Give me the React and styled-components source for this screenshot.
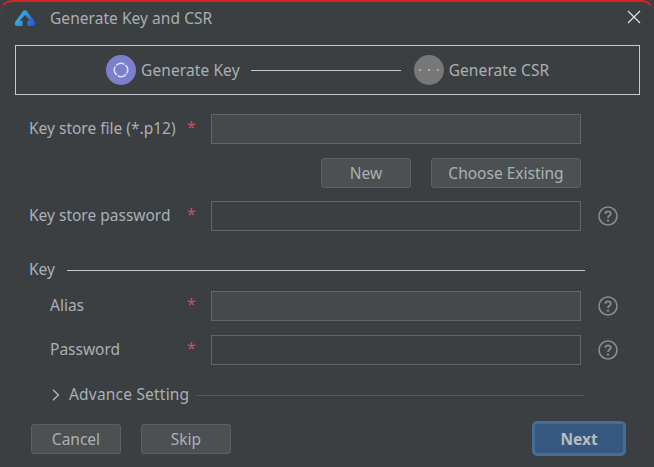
import React from "react";
import styled, { createGlobalStyle } from "styled-components";

const Global = createGlobalStyle`
  html, body { margin: 0; padding: 0; background: #3c3f41; }
  body { width: 654px; height: 467px; overflow: hidden; font-family: "Noto Sans", "Open Sans", sans-serif; }
  * { box-sizing: border-box; }
`;

const Window = styled.div`
  position: relative;
  width: 654px;
  height: 467px;
  background: #3c3f41;
  border: 1px solid #3c3f41;
  border-top: 2px solid #d8231f;
  border-radius: 12px;
  color: #a9b0b5;
  font-size: 15.5px;
  overflow: hidden;
  display: flex;
  flex-direction: column;
`;

const FrameEdge = styled.svg`
  position: absolute;
  left: -1px;
  top: -2px;
  pointer-events: none;
`;

const TitleBar = styled.div`
  height: 32px;
  display: flex;
  align-items: center;
  padding: 0 12px 0 14px;
  flex: none;
`;

const TitleText = styled.span`
  margin-left: 14px;
  flex: 1;
  color: #a9afb3;
  letter-spacing: 0.05px;
`;

const CloseIcon = styled.svg`
  margin-bottom: 2px;
  flex: none;
`;

const Stepper = styled.div`
  margin: 11px 13px 0 14px;
  height: 50px;
  border: 1px solid #c8c8c8;
  display: flex;
  align-items: center;
  padding-left: 90px;
  flex: none;
`;

const StepDot = styled.span`
  width: 30px;
  height: 30px;
  border-radius: 50%;
  background: ${(p) => p.$bg};
  display: flex;
  align-items: center;
  justify-content: center;
  flex: none;
`;

const StepLabel = styled.span`
  margin-left: 5px;
  line-height: 20px;
  white-space: nowrap;
  letter-spacing: 0.1px;
`;

const StepLine = styled.span`
  width: 150px;
  height: 1px;
  background: #c8c8c8;
  margin: 0 13px 0 11px;
  flex: none;
`;

const Form = styled.div`
  padding: 19px 0 0 28px;
  display: flex;
  flex-direction: column;
`;

const Row = styled.div`
  display: flex;
  align-items: center;
  height: 30px;
  margin-top: ${(p) => p.$top || 0}px;
`;

const Label = styled.span`
  width: 158px;
  padding-left: ${(p) => (p.$indent ? 21 : 0)}px;
  padding-bottom: 2px;
  white-space: nowrap;
  flex: none;
`;

const Required = styled.span`
  width: 24px;
  color: #c75460;
  flex: none;
  position: relative;
  top: -2px;
`;

const Field = styled.div`
  width: 370px;
  height: 30px;
  border: 1px solid #646464;
  background: ${(p) => (p.$filled ? "#45494a" : "transparent")};
  flex: none;
`;

const Help = styled.span`
  margin-left: 17px;
  width: 20px;
  height: 20px;
  display: flex;
  flex: none;
`;

const ActionRow = styled.div`
  display: flex;
  justify-content: flex-end;
  gap: 20px;
  width: 552px;
  height: 30px;
  margin-top: 14px;
`;

const Button = styled.button`
  width: ${(p) => p.$w}px;
  height: 30px;
  border: 1px solid #5e6060;
  border-radius: 3px;
  background: #4c5052;
  color: #a9b0b5;
  font: inherit;
  padding: 0;
  margin: 0;
`;

const KeyHeader = styled.div`
  display: flex;
  align-items: center;
  height: 20px;
  margin-top: 29px;
  width: 556px;
`;

const KeyText = styled.span`
  padding-bottom: 2px;
`;

const KeyRule = styled.span`
  flex: 1;
  height: 1px;
  background: #c8c8c8;
  margin-left: 12px;
`;

const AdvanceRow = styled.div`
  display: flex;
  align-items: center;
  height: 20px;
  margin-top: 20px;
  width: 556px;
  padding-left: 22px;
`;

const AdvanceText = styled.span`
  margin-left: 9px;
  padding-bottom: 2px;
  white-space: nowrap;
  letter-spacing: 0.2px;
`;

const AdvanceRule = styled.span`
  flex: 1;
  height: 1px;
  background: #545556;
  margin-left: 7px;
`;

const Footer = styled.div`
  display: flex;
  align-items: flex-start;
  gap: 20px;
  padding: 0 27px 0 30px;
  margin-top: 19px;
`;

const NextButton = styled.button`
  margin-left: auto;
  margin-top: -3px;
  width: 94px;
  height: 35px;
  border: 3px solid #466d94;
  border-radius: 5px;
  background: #365880;
  color: #b8bcbe;
  font: inherit;
  font-weight: 700;
  padding: 0;
`;

const Logo = () => (
  <svg width="21" height="16" viewBox="0 0 21 16">
    <defs>
      <linearGradient id="lg" x1="0" y1="0.2" x2="1" y2="0.7">
        <stop offset="0" stopColor="#2fc6d6" />
        <stop offset="0.5" stopColor="#2f94e0" />
        <stop offset="1" stopColor="#2a5cd0" />
      </linearGradient>
    </defs>
    <path
      fill="url(#lg)"
      fillRule="evenodd"
      d="M8.4 0.8 Q10 -0.4 11.6 0.8 L19.8 12 Q21.2 15.6 17.8 16 L2.2 16 Q-1.2 15.6 0.2 12 Z M10 5 L4.8 10.8 L7.6 10.8 L7.6 16 L12.4 16 L12.4 10.8 L15.2 10.8 Z"
    />
  </svg>
);

const Close = () => (
  <CloseIcon width="14" height="14" viewBox="0 0 14 14">
    <path d="M1 1 L13 13 M13 1 L1 13" stroke="#e6e6e6" strokeWidth="1.1" fill="none" />
  </CloseIcon>
);

const HelpIcon = () => (
  <svg width="20" height="20" viewBox="0 0 20 20">
    <circle cx="10" cy="10" r="9" fill="none" stroke="#8a8c8d" strokeWidth="1.6" />
    <path d="M7.4 7.8 C7.4 4.6 12.8 4.6 12.8 7.8 C12.8 9.6 10 9.6 10 12" fill="none" stroke="#8a8c8d" strokeWidth="1.8" />
    <circle cx="10" cy="14.6" r="1.2" fill="#8a8c8d" />
  </svg>
);

const Spinner = () => (
  <svg width="16" height="16" viewBox="0 0 16 16">
    <circle
      cx="8"
      cy="8"
      r="6.6"
      fill="none"
      stroke="#dfe2f4"
      strokeWidth="1.5"
      strokeDasharray="9 1.4"
      transform="rotate(40 8 8)"
    />
  </svg>
);

const Dots = () => (
  <svg width="20" height="4" viewBox="0 0 20 4">
    <circle cx="1" cy="2" r="1" fill="#bdbdbd" />
    <circle cx="10" cy="2" r="1" fill="#bdbdbd" />
    <circle cx="19" cy="2" r="1" fill="#bdbdbd" />
  </svg>
);

const Chevron = () => (
  <svg width="9" height="12" viewBox="0 0 9 12">
    <path d="M2 0.8 L7.4 6 L2 11.2" fill="none" stroke="#a9b0b5" strokeWidth="1.5" />
  </svg>
);

const FormRow = ({ label, indent, filled, help, top }) => (
  <Row $top={top}>
    <Label $indent={indent}>{label}</Label>
    <Required>*</Required>
    <Field $filled={filled} />
    {help && (
      <Help>
        <HelpIcon />
      </Help>
    )}
  </Row>
);

export default function App() {
  return (
    <Window>
      <Global />
      <FrameEdge width="654" height="467" viewBox="0 0 654 467">
        <path
          d="M0.6 12 Q1.5 1.5 12 0.8 M642 0.8 Q652.5 1.5 653.4 10 M0.6 458 Q1.5 464 7 466.6 M653.4 457 Q652.5 464 647 466.6"
          fill="none"
          stroke="#c92a26"
          strokeWidth="1.3"
        />
      </FrameEdge>
      <TitleBar>
        <Logo />
        <TitleText>Generate Key and CSR</TitleText>
        <Close />
      </TitleBar>
      <Stepper>
        <StepDot $bg="#7a80cc">
          <Spinner />
        </StepDot>
        <StepLabel>Generate Key</StepLabel>
        <StepLine />
        <StepDot $bg="#787878">
          <Dots />
        </StepDot>
        <StepLabel>Generate CSR</StepLabel>
      </Stepper>
      <Form>
        <FormRow label="Key store file (*.p12)" filled />
        <ActionRow>
          <Button $w={90}>New</Button>
          <Button $w={150}>Choose Existing</Button>
        </ActionRow>
        <FormRow label="Key store password" help top={13} />
        <KeyHeader>
          <KeyText>Key</KeyText>
          <KeyRule />
        </KeyHeader>
        <FormRow label="Alias" indent filled help top={11} />
        <FormRow label="Password" indent help top={14} />
        <AdvanceRow>
          <Chevron />
          <AdvanceText>Advance Setting</AdvanceText>
          <AdvanceRule />
        </AdvanceRow>
      </Form>
      <Footer>
        <Button $w={90}>Cancel</Button>
        <Button $w={90}>Skip</Button>
        <NextButton>Next</NextButton>
      </Footer>
    </Window>
  );
}
